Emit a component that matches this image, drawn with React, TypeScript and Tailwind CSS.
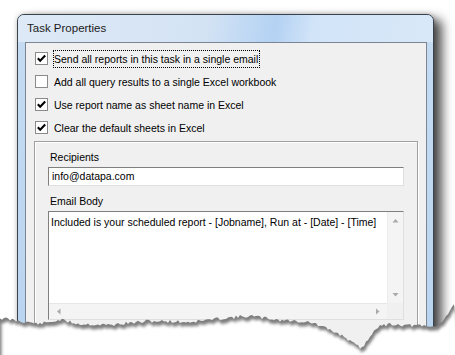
import React from "react";

const OPTIONS = [
  { label: "Send all reports in this task in a single email", checked: true, focus: true },
  { label: "Add all query results to a single Excel workbook", checked: false, focus: false },
  { label: "Use report name as sheet name in Excel", checked: true, focus: false },
  { label: "Clear the default sheets in Excel", checked: true, focus: false },
];

// rough outline of the torn bottom edge
const EDGE: [number, number][] = [
  [0, 318], [20, 321], [40, 324], [60, 320], [80, 324], [110, 325], [150, 321],
  [190, 322], [225, 318], [250, 316], [280, 320], [310, 322], [330, 330],
  [345, 337], [355, 345], [362, 348], [368, 340], [375, 328], [390, 324],
  [420, 326], [435, 327], [445, 318], [455, 302],
];

function edgePoints() {
  let seed = 11;
  const rnd = () => {
    seed = (seed * 9301 + 49297) % 233280;
    return seed / 233280;
  };
  const pts: string[] = [];
  for (let x = 0; x <= 455; x += 2) {
    let i = 0;
    while (i < EDGE.length - 2 && EDGE[i + 1][0] < x) i++;
    const [x0, y0] = EDGE[i];
    const [x1, y1] = EDGE[i + 1];
    const t = (x - x0) / (x1 - x0);
    const y = y0 + (y1 - y0) * t + (rnd() - 0.5) * 3.4;
    pts.push(`${x},${y.toFixed(1)}`);
  }
  return pts;
}

function TornEdge() {
  const pts = edgePoints();
  const d = `M0,360 L${pts.join(" L")} L460,360 Z`;
  return (
    <svg className="pointer-events-none absolute left-0 top-0" width="455" height="355">
      <defs>
        <clipPath id="below">
          <path d={d} />
        </clipPath>
        <filter id="soft" x="-5%" y="-50%" width="110%" height="200%">
          <feGaussianBlur stdDeviation="1.4" />
        </filter>
      </defs>
      <g clipPath="url(#below)">
        <rect x="0" y="280" width="455" height="80" fill="#7d7d7d" />
        <path d={d} fill="#fff" transform="translate(1.5 4)" filter="url(#soft)" />
      </g>
    </svg>
  );
}

function Check({ checked }: { checked: boolean }) {
  return (
    <span className="flex h-[13px] w-[13px] shrink-0 items-center justify-center border border-[#8a8b8c] bg-white">
      {checked && (
        <svg width="11" height="11" viewBox="0 0 11 11">
          <path d="M1.8 5.2 L4.2 7.7 L9.2 2.6" fill="none" stroke="#000" strokeWidth="2.1" />
        </svg>
      )}
    </span>
  );
}

function Arrow({ dir }: { dir: "up" | "down" | "left" | "right" }) {
  const paths = {
    up: "M0.5 4.5 L3.5 1 L6.5 4.5 Z",
    down: "M0.5 1 L3.5 4.5 L6.5 1 Z",
    left: "M4.5 0.5 L1 3.5 L4.5 6.5 Z",
    right: "M1 0.5 L4.5 3.5 L1 6.5 Z",
  };
  const vert = dir === "up" || dir === "down";
  return (
    <svg width={vert ? 7 : 5} height={vert ? 5 : 7} viewBox={vert ? "0 0 7 5" : "0 0 5 7"}>
      <path d={paths[dir]} fill="#a9a9a9" />
    </svg>
  );
}

export default function App() {
  return (
    <div className="relative h-[355px] w-[455px] overflow-hidden bg-white font-['Liberation_Sans',Arial,sans-serif] text-black">
      <div className="pl-[17px] pt-[14px]">
        <div className="flex h-[341px] w-[417px] flex-col overflow-hidden rounded-t-[7px] border border-[#3a424c] bg-[#bcd5f0] shadow-[8px_5px_11px_rgba(0,0,0,0.7),0_0_5px_rgba(0,0,0,0.22)]">
          {/* title bar */}
          <div className="flex h-[27px] shrink-0 items-center bg-[linear-gradient(100deg,#dde9f6_0%,#d4e3f4_45%,#bdd7f4_57%,#b4d2f3_62%,#d2e4f8_71%,#d8e8f8_100%)] pl-[9px] text-[11.5px] text-[#1b1b1b]">
            Task Properties
          </div>
          {/* frame + client */}
          <div className="flex min-h-0 flex-1 bg-[linear-gradient(180deg,#c4dbf2,#b9d4f0)] pl-[7px] pr-[6px]">
            <div className="flex flex-1 flex-col border border-[#7b8593] bg-[#f0f0f0] pt-[4px] text-[10.5px]">
              {OPTIONS.map((o) => (
                <div key={o.label} className="flex h-[24px] items-center pl-[9px]">
                  <Check checked={o.checked} />
                  <span
                    className={
                      "ml-[5px] border pr-[1px] leading-[16px] " +
                      (o.focus ? "border-dotted border-black" : "border-transparent")
                    }
                  >
                    {o.label}
                  </span>
                </div>
              ))}

              {/* group box */}
              <div className="mx-[8px] mt-[2px] h-[220px] border border-[#a0a0a0] px-[13px] pt-[8px] shadow-[inset_1px_1px_0_#fff,1px_1px_0_#fff]">
                <div className="ml-[2px] h-[14px] leading-[14px]">Recipients</div>
                <div className="mt-[3px] flex h-[19px] items-center border border-b-[#dfdfdf] border-l-[#7f7f7f] border-r-[#dfdfdf] border-t-[#7f7f7f] bg-white pl-[3px]">
                  info@datapa.com
                </div>
                <div className="ml-[2px] mt-[8px] h-[14px] leading-[14px]">Email Body</div>
                <div className="mt-[3px] grid h-[109px] grid-cols-[1fr_16px] grid-rows-[1fr_16px] border border-b-[#dfdfdf] border-l-[#7f7f7f] border-r-[#dfdfdf] border-t-[#7f7f7f] bg-white">
                  <div className="pl-[2px] pt-[3px] leading-[14px]">
                    Included is your scheduled report - [Jobname], Run at - [Date] - [Time]
                  </div>
                  <div className="flex flex-col items-center justify-between border-l border-[#ececec] bg-[#f4f4f4] py-[6px]">
                    <Arrow dir="up" />
                    <Arrow dir="down" />
                  </div>
                  <div className="flex items-center justify-between border-t border-[#e6e6e6] bg-[#f4f4f4] px-[7px]">
                    <Arrow dir="left" />
                    <Arrow dir="right" />
                  </div>
                  <div className="bg-[#f0f0f0]" />
                </div>
              </div>
            </div>
          </div>
        </div>
      </div>
      <TornEdge />
    </div>
  );
}
